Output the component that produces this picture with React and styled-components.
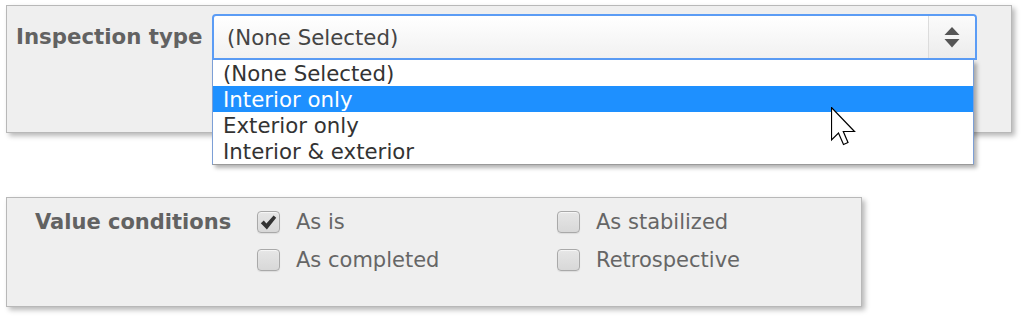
import React from "react";
import styled, { createGlobalStyle } from "styled-components";

const Global = createGlobalStyle`
  html, body { margin: 0; padding: 0; background: #ffffff; }
  body { font-family: "DejaVu Sans", Verdana, sans-serif; }
`;

const Page = styled.div`
  position: relative;
  width: 1026px;
  height: 321px;
  padding: 5px 0 0 6px;
  box-sizing: border-box;
  display: flex;
  flex-direction: column;
  gap: 64px;
`;

const Panel = styled.div`
  width: ${(p) => p.$w}px;
  height: ${(p) => p.$h}px;
  box-sizing: border-box;
  background: #efefef;
  border: 1px solid #b8b8b8;
  box-shadow: 3px 3px 5px rgba(0, 0, 0, 0.28);
  padding: ${(p) => p.$pad};
  display: flex;
  align-items: flex-start;
`;

const FieldLabel = styled.div`
  font-size: ${(p) => p.$fs || 21}px;
  font-weight: bold;
  color: #626262;
  line-height: ${(p) => p.$lh}px;
  width: ${(p) => p.$w}px;
  flex: none;
  white-space: nowrap;
`;

const SelectWrap = styled.div`
  position: relative;
  width: 765px;
  flex: none;
`;

const SelectBox = styled.div`
  height: 46px;
  box-sizing: border-box;
  border: 2px solid #5b9cf5;
  border-radius: 4px 4px 0 0;
  background: linear-gradient(#ffffff, #f1f1f1);
  display: flex;
  align-items: stretch;
`;

const SelectValue = styled.div`
  flex: 1;
  font-size: 21.3px;
  color: #444;
  padding-left: 13px;
  line-height: 43px;
`;

const ArrowCell = styled.div`
  width: 46px;
  border-left: 1px solid #dcdcdc;
  display: flex;
  align-items: center;
  justify-content: center;
  background: linear-gradient(#fbfbfb, #ececec);
  border-radius: 0 3px 0 0;
`;

const Dropdown = styled.ul`
  position: absolute;
  left: 0;
  top: 46px;
  width: 762px;
  margin: 0;
  padding: 0;
  list-style: none;
  background: #fff;
  box-sizing: border-box;
  border-left: 1px solid #7c9fd6;
  border-right: 1px solid #7c9fd6;
  border-bottom: 1px solid #9a9a9a;
  box-shadow: 3px 3px 4px rgba(0, 0, 0, 0.3);
  z-index: 2;
`;

const Option = styled.li`
  height: 26px;
  line-height: 27px;
  font-size: 21.3px;
  padding-left: 10px;
  color: ${(p) => (p.$active ? "#fff" : "#333")};
  background: ${(p) => (p.$active ? "#1e90ff" : "transparent")};
  white-space: nowrap;
`;

const CheckGrid = styled.div`
  display: grid;
  grid-template-columns: 300px 300px;
  grid-auto-rows: 38px;
`;

const CheckItem = styled.label`
  display: flex;
  align-items: center;
  gap: 16px;
  font-size: 21px;
  color: #666;
`;

const Box = styled.span`
  width: 23px;
  height: 22px;
  box-sizing: border-box;
  border: 1px solid #a9a9a9;
  border-radius: 4px;
  background: linear-gradient(#e6e6e6, #d8d8d8);
  box-shadow: inset 0 1px 1px rgba(255, 255, 255, 0.7), 0 1px 1px rgba(0, 0, 0, 0.08);
  display: flex;
  align-items: center;
  justify-content: center;
  flex: none;
`;

const Cursor = styled.svg`
  position: absolute;
  left: 831px;
  top: 107px;
  z-index: 5;
`;

const Check = ({ checked, label }) => (
  <CheckItem>
    <Box>
      {checked && (
        <svg width="17" height="15" viewBox="0 0 17 15">
          <path d="M0.8 8.2 L3.8 5.6 L6.4 8.4 L13.6 0.4 L16.2 2.8 L6.9 14.4 Z" fill="#333" />
        </svg>
      )}
    </Box>
    {label}
  </CheckItem>
);

export default function App() {
  return (
    <>
      <Global />
      <Page>
        <Panel $w={1006} $h={128} $pad="8px 0 0 9px">
          <FieldLabel $lh={46} $w={196} $fs={21.3}>Inspection type</FieldLabel>
          <SelectWrap>
            <SelectBox>
              <SelectValue>(None Selected)</SelectValue>
              <ArrowCell>
                <svg width="16" height="22" viewBox="0 0 16 22">
                  <path d="M8 1 L15.5 9 L0.5 9 Z" fill="#555" />
                  <path d="M0.5 13 L15.5 13 L8 21.5 Z" fill="#555" />
                </svg>
              </ArrowCell>
            </SelectBox>
            <Dropdown>
              <Option>(None Selected)</Option>
              <Option $active>Interior only</Option>
              <Option>Exterior only</Option>
              <Option>Interior &amp; exterior</Option>
            </Dropdown>
          </SelectWrap>
        </Panel>
        <Panel $w={856} $h={110} $pad="5px 0 0 28px">
          <FieldLabel $lh={38} $w={222}>Value conditions</FieldLabel>
          <CheckGrid>
            <Check checked label="As is" />
            <Check label="As stabilized" />
            <Check label="As completed" />
            <Check label="Retrospective" />
          </CheckGrid>
        </Panel>
        <Cursor width="28" height="40" viewBox="0 0 28 40">
          <path
            d="M0.5 0.5 L0.5 33 L7.5 26 L12.5 37.5 L17 35.5 L12.3 24.5 L23.5 24.5 Z"
            fill="#fff"
            stroke="#000"
            strokeWidth="1.2"
            strokeLinejoin="miter"
          />
        </Cursor>
      </Page>
    </>
  );
}
